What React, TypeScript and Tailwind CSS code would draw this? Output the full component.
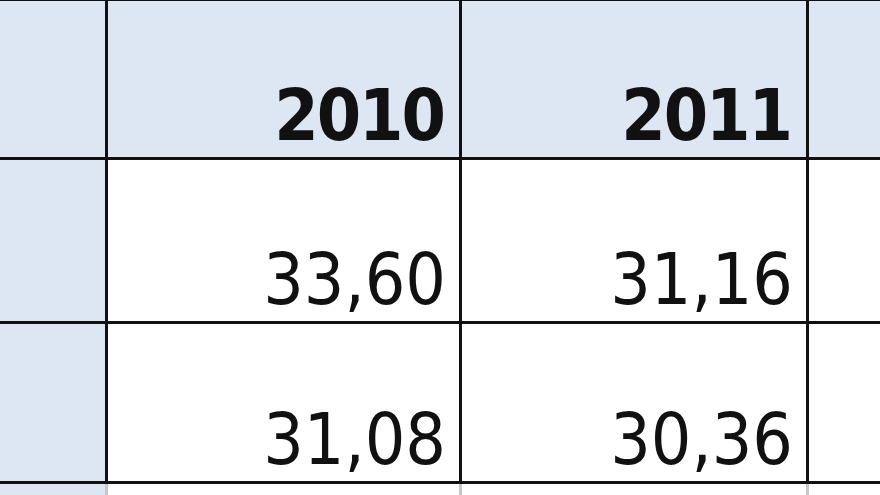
const years = ['2010', '2011']

const rows = [
  ['33,60', '31,16'],
  ['31,08', '30,36'],
]

const font = {
  fontFamily: '"DejaVu Sans Condensed", "DejaVu Sans", Tahoma, sans-serif',
}

export default function App() {
  return (
    <div className="w-[880px] h-[495px] overflow-hidden bg-white text-[#111]" style={font}>
      <div className="grid grid-cols-[105px_351px_344px_71px] grid-rows-[156px_161px_157px] gap-[3px] bg-[#111] pt-[1px] pb-[3px]">
        <div className="bg-[#dde7f3]" />
        {years.map((y) => (
          <div key={y} className="flex items-end justify-end bg-[#dde7f3] pr-[15px] pb-[6px]">
            <span className="text-[71px] font-bold leading-none tracking-[-2px] [font-stretch:condensed]">{y}</span>
          </div>
        ))}
        <div className="bg-[#dde7f3]" />
        {rows.map((r, i) => (
          <div key={i} className="contents">
            <div className="bg-[#dde7f3]" />
            {r.map((v) => (
              <div key={v} className="flex items-end justify-end bg-white pr-[13px] pb-[6px]">
                <span className="text-[71px] leading-none [font-stretch:condensed]">{v}</span>
              </div>
            ))}
            <div className="bg-white" />
          </div>
        ))}
      </div>
      <div className="grid h-[11px] grid-cols-[105px_351px_344px_71px] gap-[3px] bg-[#c8c8c8]">
        <div className="bg-[#dde7f3]" />
        <div className="bg-white" />
        <div className="bg-white" />
        <div className="bg-white" />
      </div>
    </div>
  )
}
